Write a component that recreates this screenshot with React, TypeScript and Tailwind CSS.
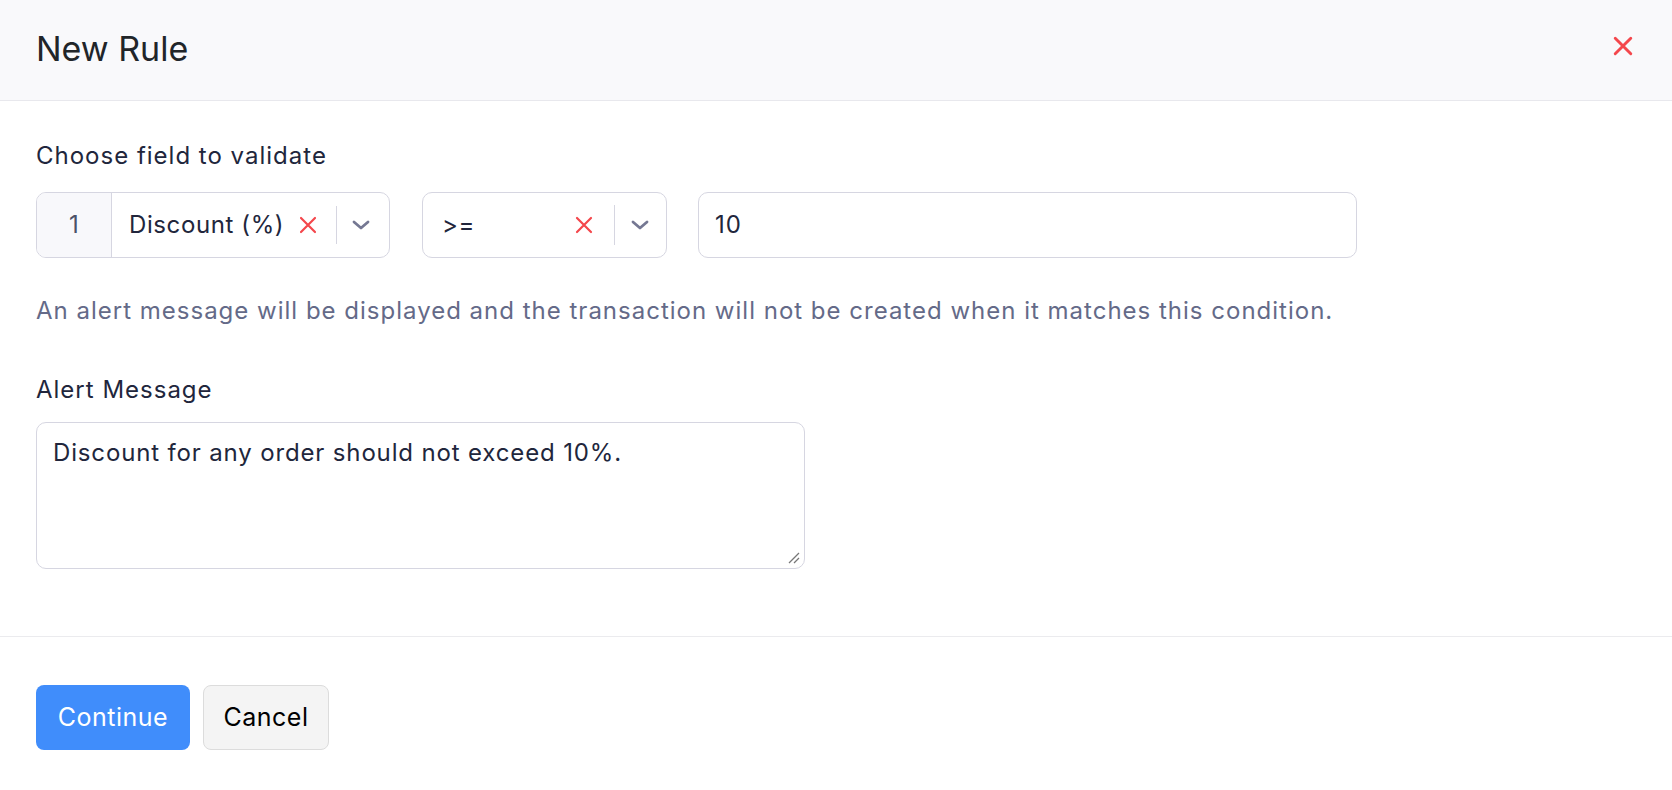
import React from "react";

const XIcon = ({ size = 18, stroke = 2.2 }: { size?: number; stroke?: number }) => (
  <svg width={size} height={size} viewBox="0 0 18 18" fill="none">
    <path d="M2 2 L16 16 M16 2 L2 16" stroke="#f4474c" strokeWidth={stroke} strokeLinecap="round" />
  </svg>
);

const Chevron = () => (
  <svg width="20" height="12" viewBox="0 0 20 12" fill="none">
    <path d="M3 3 L10 9 L17 3" stroke="#757893" strokeWidth="2.8" strokeLinecap="round" strokeLinejoin="round" />
  </svg>
);

export default function App() {
  return (
    <div
      className="w-full h-[790px] bg-white text-[#21263c] overflow-hidden"
      style={{ fontFamily: "Inter, 'Noto Sans', sans-serif" }}
    >
      <div className="h-[101px] bg-[#f9f9fb] border-b border-[#e8e8ed] flex items-center justify-between pl-[36px] pr-[38px]">
        <div className="text-[34px] leading-[40px] text-[#212529] -mt-[2px]">New Rule</div>
        <button className="w-[22px] h-[22px] flex items-center justify-center -mt-[8px]">
          <XIcon size={20} stroke={2.6} />
        </button>
      </div>

      <div className="px-[36px] pt-[39px]">
        <div className="text-[24px] leading-[32px] tracking-[1px] text-[#21263c]">Choose field to validate</div>

        <div className="flex items-center mt-[20px]">
          <div className="w-[354px] h-[66px] border border-[#d6d6e1] rounded-[10px] flex items-stretch overflow-hidden">
            <div className="w-[75px] bg-[#f8f8fb] border-r border-[#d6d6e1] flex items-center justify-center text-[24px] text-[#4b5168]">
              1
            </div>
            <div className="flex-1 flex items-center pl-[17px]">
              <span className="text-[24px] tracking-[0.6px] text-[#21263c]">Discount (%)</span>
              <span className="ml-[15px] flex items-center">
                <XIcon size={18} />
              </span>
              <span className="ml-[19px] w-px h-[38px] bg-[#d6d6e1]" />
              <span className="ml-[14px] flex items-center">
                <Chevron />
              </span>
            </div>
          </div>

          <div className="ml-[32px] w-[245px] h-[66px] border border-[#d6d6e1] rounded-[10px] flex items-center pl-[19px] pr-[16px]">
            <span className="text-[24px] tracking-[0.6px] text-[#21263c] flex-1">&gt;=</span>
            <XIcon size={18} />
            <span className="ml-[21px] w-px h-[40px] bg-[#d6d6e1]" />
            <span className="ml-[15px] flex items-center">
              <Chevron />
            </span>
          </div>

          <div className="ml-[31px] w-[659px] h-[66px] border border-[#d6d6e1] rounded-[10px] flex items-center pl-[16px]">
            <span className="text-[24px] tracking-[0.9px] text-[#21263c]">10</span>
          </div>
        </div>

        <div className="mt-[37px] text-[24px] leading-[32px] tracking-[1px] text-[#646a88]">
          An alert message will be displayed and the transaction will not be created when it matches this condition.
        </div>

        <div className="mt-[47px] text-[24px] leading-[32px] tracking-[1px] text-[#21263c]">Alert Message</div>

        <div className="mt-[16px] relative w-[769px] h-[147px] border border-[#d6d6e1] rounded-[10px] pl-[16px] pt-[14px]">
          <div className="text-[24px] leading-[32px] tracking-[0.85px] text-[#21263c]">
            Discount for any order should not exceed 10%.
          </div>
          <svg className="absolute right-[3px] bottom-[3px]" width="14" height="14" viewBox="0 0 14 14" fill="none">
            <path d="M2 12 L12 2 M7 12 L12 7" stroke="#777" strokeWidth="1.3" />
          </svg>
        </div>
      </div>

      <div className="mt-[67px] border-t border-[#ebebee]" />

      <div className="px-[36px] pt-[48px] flex gap-[13px]">
        <button className="w-[154px] h-[65px] rounded-[8px] bg-[#408dfb] text-white text-[25px] tracking-[0.5px]">
          Continue
        </button>
        <button className="w-[126px] h-[65px] rounded-[8px] bg-[#f4f4f4] border-[1.5px] border-[#dcdcdc] text-black text-[25px] tracking-[0.5px]">
          Cancel
        </button>
      </div>
    </div>
  );
}
